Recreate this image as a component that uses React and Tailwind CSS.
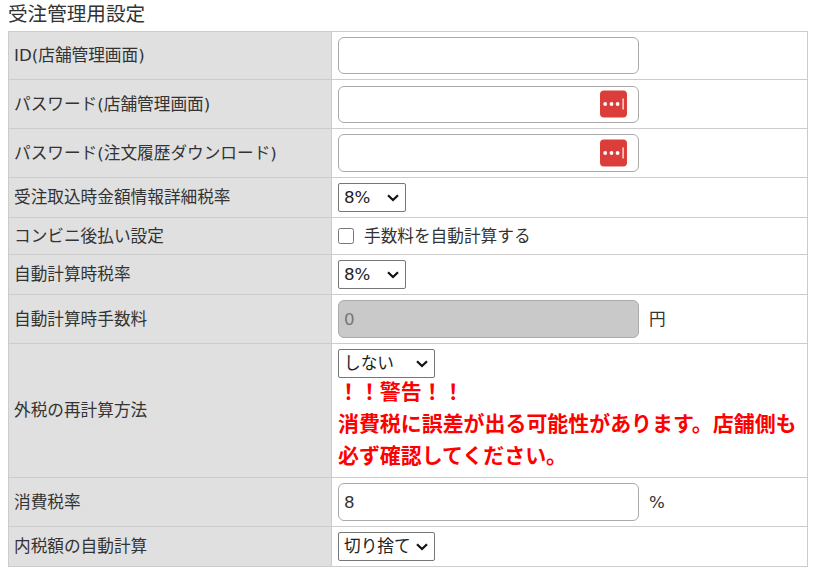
import React from "react";

const Key = () => (
  <span className="absolute right-[12px] top-1/2 h-[27px] w-[27px] -translate-y-1/2 rounded-[4px] bg-[#db3d3b]">
    <svg width="27" height="27" viewBox="0 0 27 27" fill="#fff" className="block">
      <circle cx="5.2" cy="13.5" r="1.9" />
      <circle cx="11.5" cy="13.5" r="1.9" />
      <circle cx="17.6" cy="13.5" r="1.9" />
      <rect x="22.5" y="8" width="1.2" height="11" />
    </svg>
  </span>
);

const Row = ({ label, h, top, children }) => (
  <tr style={{ height: h }}>
    <th className="w-[323px] border border-[#ccc] bg-[#e0e0e0] pl-[5px] pr-[6px] text-left align-middle font-normal">{label}</th>
    <td className={`border border-[#ccc] px-[6px] ${top ? "pt-[5px] align-top" : "align-middle"}`}>{children}</td>
  </tr>
);

const Text = ({ children, value, disabled, h = "h-[37px]" }) => (
  <span className={`relative inline-block w-[301px] ${h} align-middle`}>
    <input
      readOnly
      disabled={disabled}
      value={value ?? ""}
      className={`block h-full w-full rounded-[6px] border border-[#aaa] px-[5px] text-[16.67px] ${disabled ? "bg-[#c9c9c9] text-[#777]" : "bg-white text-[#333]"}`}
    />
    {children}
  </span>
);

const Sel = ({ w, children }) => (
  <span className={`relative block h-[29px] ${w}`}>
    <select
      className="block h-full w-full appearance-none rounded-[2px] border border-[#767676] bg-white pl-[5px] text-[16.67px] text-[#222]"
      defaultValue={children}
    >
      <option>{children}</option>
    </select>
    <svg width="12" height="8" viewBox="0 0 12 8" fill="none" stroke="#111" strokeWidth="2.2" className="pointer-events-none absolute right-[7px] top-[11px]">
      <path d="M1 1.2 L6 6 L11 1.2" />
    </svg>
  </span>
);

export default function App() {
  return (
    <div className="min-h-[572px] bg-white pl-[8px] text-[16.67px] leading-[25px] text-[#333] [font-family:'DejaVu_Sans','Noto_Sans_CJK_JP',sans-serif]">
      <h2 className="h-[31px] text-[19.6px] font-normal leading-[29px]">受注管理用設定</h2>
      <table className="w-[800px] table-fixed border-collapse">
        <tbody>
          <Row label="ID(店舗管理画面)" h={48}><Text /></Row>
          <Row label="パスワード(店舗管理画面)" h={49}><Text><Key /></Text></Row>
          <Row label="パスワード(注文履歴ダウンロード)" h={49}><Text h="h-[38px]"><Key /></Text></Row>
          <Row label="受注取込時金額情報詳細税率" h={40}><Sel w="w-[68px]">8%</Sel></Row>
          <Row label="コンビニ後払い設定" h={37}>
            <label className="flex items-center gap-[10px]">
              <input type="checkbox" className="h-[16px] w-[16px]" />
              <span>手数料を自動計算する</span>
            </label>
          </Row>
          <Row label="自動計算時税率" h={40}><Sel w="w-[68px]">8%</Sel></Row>
          <Row label="自動計算時手数料" h={49}>
            <span className="flex items-center gap-[10px]"><Text value="0" disabled h="h-[38px]" /><span>円</span></span>
          </Row>
          <Row label="外税の再計算方法" h={134} top>
            <Sel w="w-[97px]">しない</Sel>
            <div className="-mt-[2px] text-[20.95px] font-bold leading-[32px] text-[#f00]">
              <div>！！警告！！</div>
              <div>消費税に誤差が出る可能性があります。店舗側も必ず確認してください。</div>
            </div>
          </Row>
          <Row label="消費税率" h={49}>
            <span className="flex items-center gap-[10px]"><Text value="8" h="h-[38px]" /><span>%</span></span>
          </Row>
          <Row label="内税額の自動計算" h={40}><Sel w="w-[97px]">切り捨て</Sel></Row>
        </tbody>
      </table>
    </div>
  );
}
